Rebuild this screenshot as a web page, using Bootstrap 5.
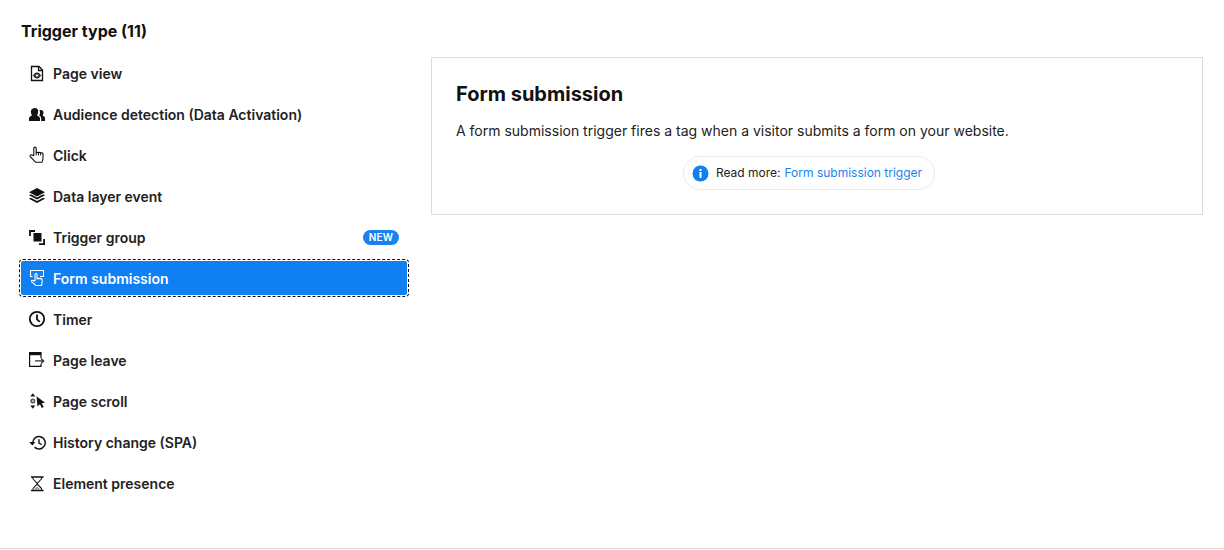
<!DOCTYPE html>
<html lang="en">
<head>
<meta charset="utf-8">
<title>Trigger type</title>
<link href="https://cdn.jsdelivr.net/npm/bootstrap@5.3.0/dist/css/bootstrap.min.css" rel="stylesheet">
<style>
html,body{height:100%;}
body{font-family:Inter,"Liberation Sans",sans-serif;color:#1a1a1a;background:#fff;overflow:hidden;}
.shell{height:549px;border-bottom:1px solid #d9d9d9;padding:21px 21px 0 21px;}
.side-head{font-size:16px;font-weight:700;line-height:20px;margin:0 0 15px 0;color:#111;}
.side-col{width:386px;flex:none;}
.main-col{margin-left:24px;margin-top:36px;flex:1 1 auto;}
.trig-list{list-style:none;padding:0;margin:0;}
.trig-item{height:34px;margin-bottom:7px;padding:0 8px 0 7px;border-radius:2px;font-size:14px;font-weight:600;color:#222;display:flex;align-items:center;}
.trig-item svg{width:18px;height:18px;flex:none;margin-right:7px;}
.trig-item.is-active{background:#0f7ff2;color:#fff;outline:1px dashed #111;outline-offset:1px;}
.new-tag{margin-left:auto;background:#1a82f0;color:#fff;font-size:10px;font-weight:600;line-height:15px;padding:0 6px;border-radius:8px;letter-spacing:.1px;}
.info-panel{border:1px solid #dcdcdc;height:158px;padding:23px 40px 0 24px;}
.info-title{font-size:20px;font-weight:700;line-height:26px;margin:0 0 14px;color:#111;}
.info-text{font-size:14px;line-height:20px;margin:0 0 15px;color:#222;}
.more-pill{border:1px solid #ececec;border-radius:17px;height:34px;padding:0 12px 0 8px;font-size:12px;color:#222;}
.more-pill svg{width:17px;height:17px;margin-right:7px;}
.more-pill a{color:#1a82f0;text-decoration:none;margin-left:4px;}
</style>
</head>
<body>
<div class="shell d-flex">
  <div class="side-col">
    <h2 class="side-head">Trigger type (11)</h2>
    <ul class="trig-list">
      <li class="trig-item"><svg viewBox="0 0 18 18" fill="none" stroke="#111" stroke-width="1.300"><path d="M3.500 2.500h7.500l3.500 3.500v10.500h-11z"/><path d="M10.500 2.500v4h4"/><path d="M5.300 11.500c1-1.700 2.300-2.500 3.700-2.500s2.700.8 3.700 2.500c-1 1.700-2.300 2.500-3.700 2.500s-2.700-.8-3.700-2.500z" fill="#444" stroke-width="1"/><circle cx="9" cy="11.500" r="1.100" fill="#fff" stroke="none"/></svg>Page view</li>
      <li class="trig-item"><svg viewBox="0 0 18 18" fill="#111"><path d="M7 3c2 0 3.200 1.500 3.200 3.500S9.500 9.500 8.800 10.300c1.500.7 2.900 1.300 3.200 3V16H1v-2.700c.3-1.700 1.700-2.300 3.200-3C3.500 9.500 2.800 8.500 2.800 6.500S5 3 7 3z"/><path d="M13 5c1.500 0 2.500 1.200 2.500 2.800 0 1.300-.5 2-1 2.700 1.100.5 2.200 1 2.500 2.300V16h-3.800v-3c-.2-1.200-1-2-2-2.500.7-1 .9-2.100.8-3.400-.1-.8-.3-1.300-.5-1.700.4-.3.900-.4 1.500-.4z"/></svg>Audience detection (Data Activation)</li>
      <li class="trig-item"><svg viewBox="0 0 18 18" fill="none" stroke="#111" stroke-width="1.100" stroke-linejoin="round"><path d="M5.800 9.500V2.300c0-1.600 2.400-1.600 2.400 0V7c0-1 2.200-1 2.200 0 0-.9 2.200-.9 2.200.2 0-.8 2.400-.7 2.400.6v4.200c0 1.700-.6 2.800-1 4.200H7.500L2.300 10.600c-.9-1.200.5-2.400 1.600-1.500z"/><path d="M8.200 7v2.500M10.400 7v2.500M12.600 7.200v2.300" stroke-width=".95"/></svg>Click</li>
      <li class="trig-item"><svg viewBox="0 0 18 18" fill="#111"><path d="M9 1l8 4.200-8 4.200-8-4.200z"/><path d="M1 8.300l1.800-1L9 10.600l6.200-3.300 1.800 1-8 4.200z"/><path d="M1 11.800l1.800-1L9 14.100l6.200-3.300 1.800 1L9 16z"/></svg>Data layer event</li>
      <li class="trig-item"><svg viewBox="0 0 18 18" fill="none" stroke="#111" stroke-width="1.800"><path d="M2 8V3h5"/><path d="M16.100 11v5.100H11"/><rect x="5.500" y="5" width="8" height="8.500" fill="#111" stroke="none"/></svg>Trigger group<span class="new-tag">NEW</span></li>
      <li class="trig-item is-active"><svg viewBox="0 0 18 18" fill="none" stroke="#fff" stroke-width="1.100" stroke-linejoin="round"><path d="M4.500 7.500H2.500V1.500h13v6H12"/><path d="M7 12V5.500c0-1.300 2-1.300 2 0V10c0-1 1.700-1 1.700 0 0-1 1.700-1 1.700 0 0-.8 1.700-.6 1.700.5v3c0 1.300-.4 2-.7 3H8L3.800 12.800c-.8-1 .3-2 1.300-1.200z"/></svg>Form submission</li>
      <li class="trig-item"><svg viewBox="0 0 18 18" fill="none" stroke="#111" stroke-width="1.800"><circle cx="9" cy="9" r="7.200"/><path d="M9 4.500V9.300l2.800 2.500"/></svg>Timer</li>
      <li class="trig-item"><svg viewBox="0 0 18 18" fill="none" stroke="#111" stroke-width="1.200"><path d="M13 7V1.700H1.600v13.700H13V13"/><path d="M1.600 3h11.400" stroke-width="2.400"/><path d="M7 9.900h8.500M13 7.400l2.700 2.500-2.700 2.500" stroke="#333" stroke-width="1.300"/></svg>Page leave</li>
      <li class="trig-item"><svg viewBox="0 0 18 18" fill="#111"><path d="M4.800 1.200l2.500 3.200H2.300z"/><path d="M4.800 16.800l2.500-3.200H2.300z"/><circle cx="4.800" cy="9" r="2.500" fill="#555" stroke="none"/><circle cx="4.800" cy="9" r="1" fill="#ccc" stroke="none"/><path d="M8.500 4.300l8.500 6.500-3.300.5 2 3.700-1.900 1-1.900-3.800-2.400 2.300z"/></svg>Page scroll</li>
      <li class="trig-item"><svg viewBox="0 0 18 18" fill="none" stroke="#111" stroke-width="1.500"><path d="M4.800 9.500a6.200 6.200 0 1 1 1.800 4.600"/><path d="M1.300 9h6L4.300 12.500z" fill="#111" stroke="none"/><path d="M11 6.200V10.200l2.600 1.400" stroke-width="1.400"/></svg>History change (SPA)</li>
      <li class="trig-item"><svg viewBox="0 0 18 18" fill="none" stroke="#111" stroke-width="1.100"><path d="M3 3h12.500M3 16.500h12.500" stroke-width="1.300"/><path d="M4.500 3c0 3.500 4 4.500 4.700 6.700-.7 2.200-4.700 3.300-4.700 6.800M14 3c0 3.500-4 4.500-4.800 6.700.8 2.200 4.800 3.300 4.800 6.800"/><path d="M6 15.800c.8-1.500 2.200-2.300 3.200-3 1 .7 2.400 1.500 3.200 3z" fill="#999" stroke="none"/></svg>Element presence</li>
    </ul>
  </div>
  <div class="main-col">
    <div class="info-panel">
      <h1 class="info-title">Form submission</h1>
      <p class="info-text">A form submission trigger fires a tag when a visitor submits a form on your website.</p>
      <div class="d-flex justify-content-center">
        <div class="more-pill d-inline-flex align-items-center">
          <svg viewBox="0 0 17 17"><circle cx="8.500" cy="8.500" r="8" fill="#0f7ff2"/><rect x="7.500" y="7" width="2" height="6" fill="#fff"/><rect x="7.500" y="4" width="2" height="2" fill="#fff"/></svg>
          <span>Read more:</span><a href="#">Form submission trigger</a>
        </div>
      </div>
    </div>
  </div>
</div>
<script src="https://cdn.jsdelivr.net/npm/bootstrap@5.3.0/dist/js/bootstrap.bundle.min.js"></script>
</body>
</html>
